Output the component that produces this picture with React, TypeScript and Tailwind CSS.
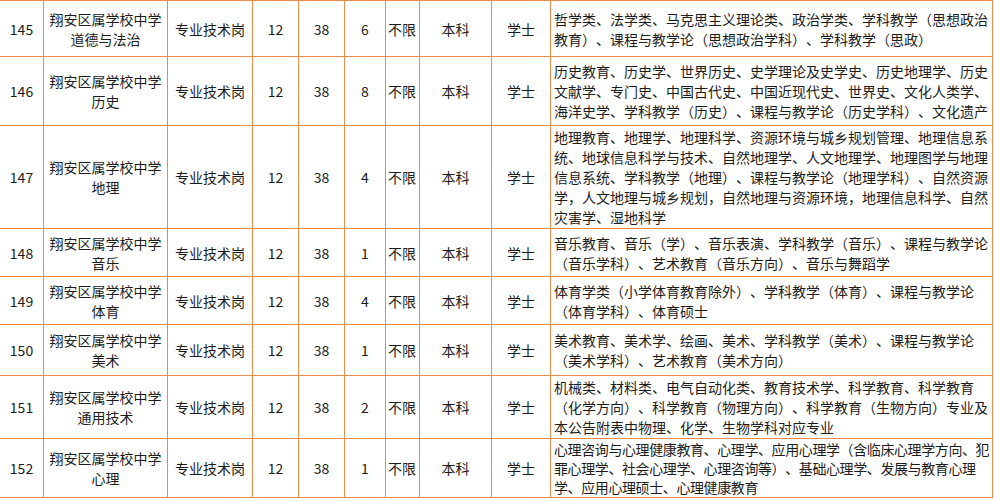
const rows = [
    {
        no: '145',
        subject: '道德与法治',
        count: '6',
        h: 'h-[56px]',
        majors: [
            '哲学类、法学类、马克思主义理论类、政治学类、学科教学（思想政治',
            '教育）、课程与教学论（思想政治学科）、学科教学（思政）',
        ],
    },
    {
        no: '146',
        subject: '历史',
        count: '8',
        h: 'h-[69px]',
        majors: [
            '历史教育、历史学、世界历史、史学理论及史学史、历史地理学、历史',
            '文献学、专门史、中国古代史、中国近现代史、世界史、文化人类学、',
            '海洋史学、学科教学（历史）、课程与教学论（历史学科）、文化遗产',
        ],
    },
    {
        no: '147',
        subject: '地理',
        count: '4',
        h: 'h-[103px]',
        majors: [
            '地理教育、地理学、地理科学、资源环境与城乡规划管理、地理信息系',
            '统、地球信息科学与技术、自然地理学、人文地理学、地理图学与地理',
            '信息系统、学科教学（地理）、课程与教学论（地理学科）、自然资源',
            '学，人文地理与城乡规划，自然地理与资源环境，地理信息科学、自然',
            '灾害学、湿地科学',
        ],
    },
    {
        no: '148',
        subject: '音乐',
        count: '1',
        h: 'h-[48px]',
        majors: [
            '音乐教育、音乐（学）、音乐表演、学科教学（音乐）、课程与教学论',
            '（音乐学科）、艺术教育（音乐方向）、音乐与舞蹈学',
        ],
    },
    {
        no: '149',
        subject: '体育',
        count: '4',
        h: 'h-[48px]',
        majors: ['体育学类（小学体育教育除外）、学科教学（体育）、课程与教学论', '（体育学科）、体育硕士'],
    },
    {
        no: '150',
        subject: '美术',
        count: '1',
        h: 'h-[51px]',
        majors: ['美术教育、美术学、绘画、美术、学科教学（美术）、课程与教学论', '（美术学科）、艺术教育（美术方向）'],
    },
    {
        no: '151',
        subject: '通用技术',
        count: '2',
        h: 'h-[63px]',
        majors: [
            '机械类、材料类、电气自动化类、教育技术学、科学教育、科学教育',
            '（化学方向）、科学教育（物理方向）、科学教育（生物方向）专业及',
            '本公告附表中物理、化学、生物学科对应专业',
        ],
    },
    {
        no: '152',
        subject: '心理',
        count: '1',
        h: 'h-[59px]',
        tight: true,
        majors: [
            '心理咨询与心理健康教育、心理学、应用心理学（含临床心理学方向、犯',
            '罪心理学、社会心理学、心理咨询等）、基础心理学、发展与教育心理',
            '学、应用心理硕士、心理健康教育',
        ],
    },
];

const cell = 'border border-[#ec8a4c] align-middle p-0';

export default function App() {
    return (
        <div className="w-[994px] h-[500px] overflow-hidden bg-white text-[#1c1c1c] font-['Noto_Sans_CJK_SC','Noto_Sans',sans-serif] text-[14px] leading-[20px] [text-spacing-trim:space-all]">
            <table className="table-fixed border-collapse w-[993px] -ml-px">
                <colgroup>
                    <col className="w-[44px]" />
                    <col className="w-[124px]" />
                    <col className="w-[85px]" />
                    <col className="w-[46px]" />
                    <col className="w-[46px]" />
                    <col className="w-[41px]" />
                    <col className="w-[34px]" />
                    <col className="w-[72px]" />
                    <col className="w-[59px]" />
                    <col className="w-[442px]" />
                </colgroup>
                <tbody>
                    {rows.map((r) => (
                        <tr key={r.no} className={r.h}>
                            <td className={`${cell} text-center`}>{r.no}</td>
                            <td className={`${cell} text-center`}>
                                <div>翔安区属学校中学</div>
                                <div>{r.subject}</div>
                            </td>
                            <td className={`${cell} text-center`}>专业技术岗</td>
                            <td className={`${cell} text-center`}>12</td>
                            <td className={`${cell} text-center`}>38</td>
                            <td className={`${cell} text-center`}>{r.count}</td>
                            <td className={`${cell} pl-[2px] whitespace-nowrap`}>不限</td>
                            <td className={`${cell} text-center`}>本科</td>
                            <td className={`${cell} text-center`}>学士</td>
                            <td className={`${cell} pl-[3px]`}>
                                {r.majors.map((line, i) => (
                                    <div
                                        key={i}
                                        className={
                                            r.tight
                                                ? 'whitespace-nowrap leading-[19px] tracking-[-0.4px]'
                                                : 'whitespace-nowrap'
                                        }
                                    >
                                        {line}
                                    </div>
                                ))}
                            </td>
                        </tr>
                    ))}
                </tbody>
            </table>
        </div>
    );
}
